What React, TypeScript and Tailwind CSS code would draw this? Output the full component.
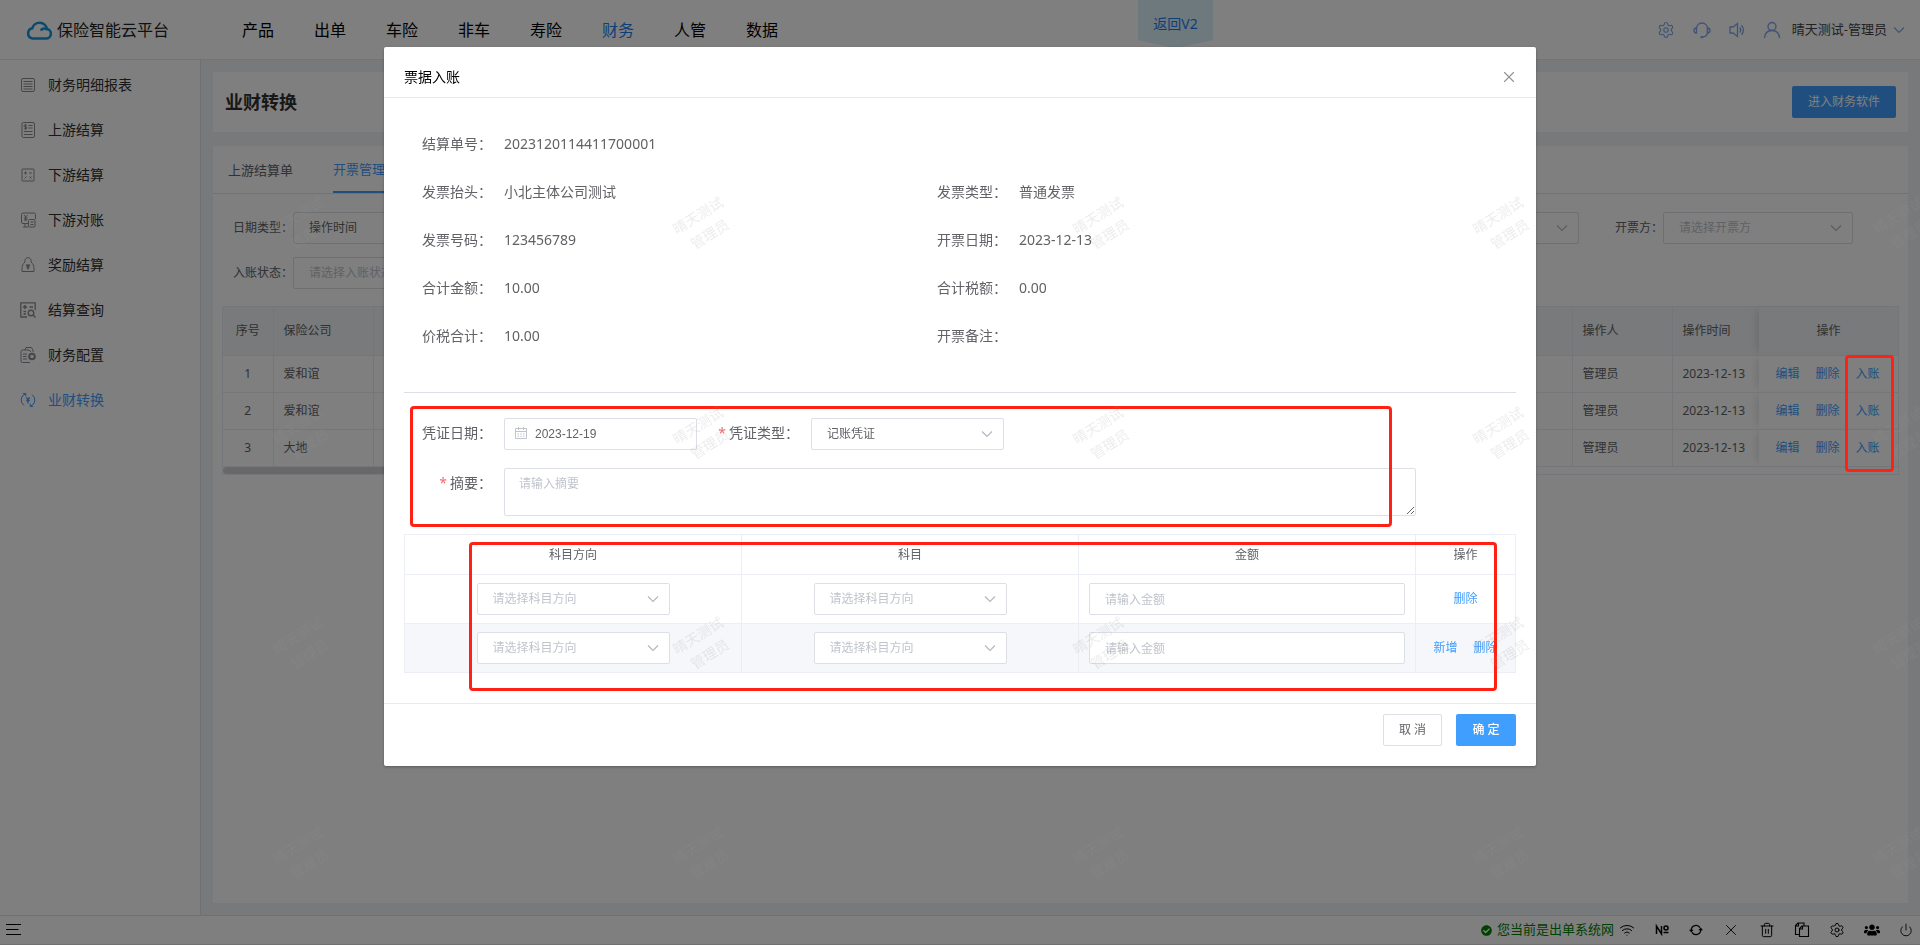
import { useId, useState } from 'react';
import type { ReactNode } from 'react';
import { Power, Settings, Trash2, Wifi, X } from 'lucide-react';
import { FaCheckCircle, FaUsers } from 'react-icons/fa';

const navItems = ['产品', '出单', '车险', '非车', '寿险', '财务', '人管', '数据'];

const invoiceRows = [
    { id: 1, company: '爱和谊', operator: '管理员', date: '2023-12-13' },
    { id: 2, company: '爱和谊', operator: '管理员', date: '2023-12-13' },
    { id: 3, company: '大地', operator: '管理员', date: '2023-12-13' },
];

const details = [
    ['结算单号', '2023120114411700001'],
    null,
    ['发票抬头', '小北主体公司测试'],
    ['发票类型', '普通发票'],
    ['发票号码', '123456789'],
    ['开票日期', '2023-12-13'],
    ['合计金额', '10.00'],
    ['合计税额', '0.00'],
    ['价税合计', '10.00'],
    ['开票备注', ''],
];

function MenuIcon({ children }: { children: ReactNode }) {
    return (
        <svg viewBox="0 0 16 16" className="size-4 shrink-0" fill="none" stroke="currentColor" strokeWidth="1">
            {children}
        </svg>
    );
}

function Arrow({ className = '' }: { className?: string }) {
    return (
        <svg viewBox="0 0 12 8" className={`h-2 w-3 ${className}`} fill="none" stroke="currentColor" strokeWidth="1.2">
            <path d="M1 1.5l5 5 5-5" />
        </svg>
    );
}

const menuItems = [
    {
        label: '财务明细报表',
        icon: (
            <>
                <rect x="1.5" y="1.5" width="13" height="13" rx="1.5" />
                <path d="M3.5 4.5h9M3.5 7h9M3.5 9.5h9M3.5 12h9" />
            </>
        ),
    },
    {
        label: '上游结算',
        icon: (
            <>
                <rect x="2" y=".5" width="12.5" height="15" rx="1.5" />
                <path d="M8.5 3.5h4M8.5 6h4M4 9.5h8.5M4 12.5h8.5M6.8 3H5a.9.9 0 0 0 0 1.9h1a.9.9 0 0 1 0 1.9H4.2M5.5 2.2v5.4" />
            </>
        ),
    },
    {
        label: '下游结算',
        icon: (
            <>
                <rect x="2" y="2" width="12" height="12" rx=".5" />
                <path d="M4 6h3M5.5 4.5v3M9 6h3M4.5 11.5l2-2M9.5 9.5l2 2M11.5 9.5l-2 2" />
            </>
        ),
    },
    {
        label: '下游对账',
        icon: (
            <>
                <path d="M8 11.5H3A1.5 1.5 0 0 1 1.5 10V2.5A1.5 1.5 0 0 1 3 1h11a1.5 1.5 0 0 1 1.5 1.5V7M3 15h5M5 11.5V15M4 3l1.700 2L7.400 3M5.700 5v4M4 6h3.500M4 7.800h3.500" />
                <rect x="8.5" y="7.5" width="6.5" height="7.5" rx="1" />
                <path d="M10.5 10h3M10.5 12.5h3" />
            </>
        ),
    },
    {
        label: '奖励结算',
        icon: (
            <>
                <path d="M5 5a3.200 3.200 0 1 1 6 0c2 1.500 3 4 3 6.500v3H2v-3C2 9 3 6.500 5 5z" />
                <path d="M8 7.500v5M6.300 7.500L8 9.500l1.700-2M6.500 10h3" strokeWidth="1.5" />
            </>
        ),
    },
    {
        label: '结算查询',
        icon: (
            <>
                <path d="M7 15H.8V.8h14.400V8" strokeWidth="1.3" />
                <path d="M3 5h4M5 3v4M9.500 5h3.500M3.500 9.500H6M3.500 12H6" strokeWidth="1.5" />
                <circle cx="11" cy="11" r="2.8" strokeWidth="1.4" />
                <path d="M13 13l2.500 2.500" strokeWidth="1.4" />
            </>
        ),
    },
    {
        label: '财务配置',
        icon: (
            <>
                <path d="M10 15.500H2.500A1.500 1.500 0 0 1 1 14V4.500A1.500 1.500 0 0 1 2.500 3H9l2 2M5 3l1-2.500h5.500L13 3v2M3 7h4M3 9.500h3.500M3 12h4" />
                <circle cx="12" cy="9.5" r="2.8" strokeWidth="2" />
            </>
        ),
    },
    {
        label: '业财转换',
        icon: (
            <>
                <path d="M5.500 1.800a6.500 6.500 0 0 0-1.500 11.500M3 1.500h2.800v2.800M10.500 14.200A6.500 6.500 0 0 0 12 2.700M13 14.500h-2.800v-2.800" />
                <path d="M8 7.500v4M6.300 5.300L8 7.500l1.700-2.200M6.300 8.500h3.400" strokeWidth="1.3" />
            </>
        ),
    },
];

interface SelectBoxProps {
    id?: string;
    label?: string;
    value: string;
    filled?: boolean;
    width?: string;
}

function SelectBox({ id, label, value, filled, width = 'w-[193px]' }: SelectBoxProps) {
    return (
        <span className={`relative inline-block ${width}`}>
            <select
                id={id}
                aria-label={label}
                className={`block h-8 w-full appearance-none rounded-xs border border-[#dcdfe6] bg-white px-[15px] text-xs ${filled ? 'text-[#606266]' : 'text-[#c0c4cc]'}`}
            >
                <option>{value}</option>
            </select>
            <Arrow className="pointer-events-none absolute top-3 right-[11px] text-[#b4b8c0]" />
        </span>
    );
}

function Filter({ label, value, filled }: { label: string; value: string; filled?: boolean }) {
    const id = useId();
    return (
        <div className="flex items-center">
            <label htmlFor={id} className="w-[70px] text-right text-xs whitespace-nowrap text-[#606266]">
                {label}
            </label>
            <SelectBox id={id} value={value} filled={filled} width="w-[190px]" />
        </div>
    );
}

function Header() {
    return (
        <header className="relative flex h-[60px] items-center border-b border-[#e4e7ed] bg-white pr-[15px] pl-[26px]">
            <svg viewBox="0 0 26 20" className="h-5 w-[26px]" fill="none" stroke="#1296db" strokeWidth="2.6" strokeLinecap="round">
                <path d="M6.500 18.500h13.200a4.800 4.800 0 0 0 1.300-9.500A7.600 7.600 0 0 0 6.200 8.300a5.200 5.200 0 0 0 .3 10.200z" />
                <path d="M15.500 9.600A5 5 0 0 1 20.500 9" />
            </svg>
            <span className="ml-[5px] w-[185px] text-base text-[#222]">保险智能云平台</span>
            <nav className="flex gap-10">
                {navItems.map((item) => (
                    <a key={item} href="#" className={`text-base ${item === '财务' ? 'text-[#1c7cec]' : 'text-black'}`}>
                        {item}
                    </a>
                ))}
            </nav>
            <a
                href="#"
                className="absolute top-0 left-[1138px] flex h-12 w-[75px] items-center justify-center bg-[#dcf2fb] text-sm text-[#1c7cec] [clip-path:polygon(0_0,100%_0,100%_84%,50%_100%,0_84%)]"
            >
                返回V2
            </a>
            <div className="ml-auto flex items-center text-[#7fa8e8]">
                <button aria-label="设置" className="mr-[18px]">
                    <Settings className="size-[18px]" strokeWidth={1.5} />
                </button>
                <button aria-label="客服" className="mr-[18px]">
                    <svg viewBox="0 0 18 18" className="size-[18px]" fill="none" stroke="currentColor" strokeWidth="1.3">
                        <path d="M3.500 7.500a5.500 5.500 0 0 1 11 0v4c0 2.500-1.500 4-5 4.500" />
                        <path d="M3.500 7v5C1.800 12 1 11 1 9.500S1.800 7 3.500 7zM14.500 7v5c1.700 0 2.500-1 2.500-2.500S16.200 7 14.500 7z" />
                        <path d="M7.500 16.200h2.500" strokeWidth="2" />
                    </svg>
                </button>
                <button aria-label="消息" className="mr-[18px]">
                    <svg viewBox="0 0 16 16" className="size-4" fill="none" stroke="currentColor" strokeWidth="1.3">
                        <path d="M1 5h3l4.500-3.500v13L4 11H1zM10.800 5.500a4 4 0 0 1 0 5M12.500 3.200a7 7 0 0 1 0 9.600" />
                    </svg>
                </button>
                <button className="flex items-center">
                    <svg viewBox="0 0 18 18" className="size-[18px]" fill="none" stroke="currentColor" strokeWidth="1.4">
                        <circle cx="9" cy="5.5" r="4" />
                        <path d="M1.500 17c.3-4.500 3-7.500 7.500-7.500s7.200 3 7.500 7.500" />
                    </svg>
                    <span className="ml-[11px] text-[13px] text-[#444]">晴天测试-管理员</span>
                    <Arrow className="ml-[6px]" />
                </button>
            </div>
        </header>
    );
}

function Sidebar() {
    return (
        <aside className="w-[201px] shrink-0 border-r border-[#e0e0e0] bg-white pt-[2px]">
            {menuItems.map(({ label, icon }) => (
                <a
                    key={label}
                    href="#"
                    className={`flex h-[45px] items-center gap-3 pl-5 ${label === '业财转换' ? 'text-[#409eff]' : 'text-[#8a8d92]'}`}
                >
                    <MenuIcon>{icon}</MenuIcon>
                    <span className={`text-sm ${label === '业财转换' ? '' : 'text-[#303133]'}`}>{label}</span>
                </a>
            ))}
        </aside>
    );
}

function InvoiceTable() {
    const cell = 'border-r border-b border-[#e8ecf2]';
    const lastCells = 'border-b border-[#e8ecf2]';
    const fixedShadow = 'shadow-[-6px_0_8px_-4px_rgba(0,0,0,0.12)]';
    return (
        <div className="mx-[9px] mt-[17px] border border-[#e8ecf2]">
            <table className="w-full table-fixed border-collapse text-left text-xs text-[#606266]">
                <colgroup>
                    <col className="w-[50px]" />
                    <col className="w-[100px]" />
                    <col />
                    <col className="w-[100px]" />
                    <col className="w-[87px]" />
                    <col className="w-[139px]" />
                </colgroup>
                <thead className="bg-[#f1f4f8]">
                    <tr className="h-12">
                        <th className={`${cell} text-center font-normal`}>序号</th>
                        <th className={`${cell} pl-[10px] font-normal`}>保险公司</th>
                        <td className={cell} />
                        <th className={`${cell} pl-[10px] font-normal`}>操作人</th>
                        <th className={`${lastCells} pl-[10px] font-normal`}>操作时间</th>
                        <th className={`${lastCells} ${fixedShadow} text-center font-normal`}>操作</th>
                    </tr>
                </thead>
                <tbody>
                    {invoiceRows.map((row) => (
                        <tr key={row.id} className="h-[37px]">
                            <td className={`${cell} text-center`}>{row.id}</td>
                            <td className={`${cell} pl-[10px]`}>{row.company}</td>
                            <td className={cell} />
                            <td className={`${cell} pl-[10px]`}>{row.operator}</td>
                            <td className={`${lastCells} pl-[10px] whitespace-nowrap`}>{row.date}</td>
                            <td className={`${lastCells} ${fixedShadow} pr-[2px]`}>
                                <span className="flex justify-center gap-4 text-[#409eff]">
                                    <button>编辑</button>
                                    <button>删除</button>
                                    <button>入账</button>
                                </span>
                            </td>
                        </tr>
                    ))}
                </tbody>
            </table>
            <div className="h-[7px] w-2/3 rounded-full bg-[#d0d0d0]" />
        </div>
    );
}

function StatusBar() {
    return (
        <footer className="flex h-[30px] items-center border-t border-b border-[#e0e0e0] bg-white pr-[7px] pl-[6px] text-black">
            <button aria-label="菜单">
                <svg viewBox="0 0 15 12" className="h-3 w-[15px]" stroke="currentColor" strokeWidth="1">
                    <path d="M0 .5h15M0 5.500h12.500M0 10.500h15" />
                </svg>
            </button>
            <span className="ml-auto flex items-center gap-[5px] text-[13px] text-[#008000]">
                <FaCheckCircle className="size-[11px]" />
                您当前是出单系统网
            </span>
            <div className="ml-[5px] flex items-center gap-[19px]">
                <Wifi className="size-4" strokeWidth={1.5} />
                <svg viewBox="0 0 16 16" className="size-4" fill="none" stroke="currentColor" strokeWidth="1.5" role="img" aria-label="编号">
                    <path d="M2.500 12V4l5 8V4" />
                    <circle cx="12" cy="6" r="2" />
                    <path d="M9.500 10.500h5" />
                </svg>
                <button aria-label="刷新">
                    <svg viewBox="0 0 14 14" className="size-[14px]" fill="none" stroke="currentColor" strokeWidth="1.3">
                        <path d="M2.300 8V7A4.700 4.700 0 0 1 11 4.600M11.700 6v1A4.700 4.700 0 0 1 3 9.400" />
                        <path d="M0 6.800h4.600L2.300 9.600zM9.400 7.200H14L11.700 4.400z" fill="currentColor" stroke="none" />
                    </svg>
                </button>
                <button aria-label="关闭页签"><X className="size-[18px]" strokeWidth={1.2} /></button>
                <button aria-label="清除"><Trash2 className="size-4" strokeWidth={1.5} /></button>
                <button aria-label="复制">
                    <svg viewBox="0 0 16 16" className="size-4" fill="none" stroke="currentColor" strokeWidth="1.1">
                        <path d="M5 12.500H1.500v-9L4 1h6v3M4.500 1v3h-3" />
                        <path d="M5.500 14.500v-8L8 4h6.500v10.500zM8.500 4v3h-3" />
                    </svg>
                </button>
                <button aria-label="系统设置"><Settings className="size-4" strokeWidth={1.5} /></button>
                <button aria-label="用户"><FaUsers className="size-4" /></button>
                <button aria-label="退出"><Power className="size-[14px]" strokeWidth={1.5} /></button>
            </div>
        </footer>
    );
}

function SubjectTable() {
    const cell = 'border border-[#ebeef5] text-center';
    return (
        <table className="mt-2 w-full table-fixed border-collapse text-xs text-[#606266]">
            <colgroup>
                <col />
                <col />
                <col />
                <col className="w-[100px]" />
            </colgroup>
            <thead>
                <tr className="h-10">
                    <th className={`${cell} font-normal`}>科目方向</th>
                    <th className={`${cell} font-normal`}>科目</th>
                    <th className={`${cell} font-normal`}>金额</th>
                    <th className={`${cell} font-normal`}>操作</th>
                </tr>
            </thead>
            <tbody>
                {[0, 1].map((row) => (
                    <tr key={row} className={row === 1 ? 'h-[49px] bg-[#f5f7fa]' : 'h-[49px]'}>
                        <td className={cell}>
                            <div className="flex justify-center">
                                <SelectBox label="科目方向" value="请选择科目方向" />
                            </div>
                        </td>
                        <td className={cell}>
                            <div className="flex justify-center">
                                <SelectBox label="科目" value="请选择科目方向" />
                            </div>
                        </td>
                        <td className={`${cell} px-[10px]`}>
                            <input
                                aria-label="金额"
                                placeholder="请输入金额"
                                className="block h-8 w-full rounded-xs border border-[#dcdfe6] bg-white px-[15px] placeholder:text-[#c0c4cc]"
                            />
                        </td>
                        <td className={cell}>
                            <span className="flex justify-center gap-4 text-[#409eff]">
                                {row === 1 && <button>新增</button>}
                                <button>删除</button>
                            </span>
                        </td>
                    </tr>
                ))}
            </tbody>
        </table>
    );
}

function VoucherForm() {
    const [date, setDate] = useState('2023-12-19');
    const label = 'w-[100px] shrink-0 pr-3 text-right text-sm leading-[30px] whitespace-nowrap text-[#606266]';
    return (
        <form className="pt-[25px]">
            <div className="flex gap-[14px]">
                <div className="flex">
                    <label htmlFor="voucher-date" className={label}>凭证日期：</label>
                    <span className="relative">
                        <svg viewBox="0 0 14 14" className="absolute top-2 left-[10px] size-[14px] text-[#c0c4cc]" fill="none" stroke="currentColor" strokeWidth="1">
                            <path d="M1.500 2.500h11v10h-11zM1.500 5.500h11M4.500 1v3M9.500 1v3M3.500 8h1.500M6.300 8h1.500M9 8h1.500M3.500 10.300h1.500M6.300 10.300h1.500M9 10.300h1.500" />
                        </svg>
                        <input
                            id="voucher-date"
                            value={date}
                            onChange={(e) => setDate(e.target.value)}
                            className="block h-8 w-[193px] rounded-xs border border-[#dcdfe6] pl-[30px] font-['Liberation_Sans',sans-serif] text-xs text-[#606266]"
                        />
                    </span>
                </div>
                <div className="flex">
                    <label htmlFor="voucher-type" className={label}>
                        <span className="mr-[3px] text-[#f56c6c]">*</span>凭证类型：
                    </label>
                    <SelectBox id="voucher-type" value="记账凭证" filled />
                </div>
            </div>
            <div className="mt-[18px] mr-[100px] flex">
                <label htmlFor="summary" className={label}>
                    <span className="mr-[3px] text-[#f56c6c]">*</span>摘要：
                </label>
                <textarea
                    id="summary"
                    placeholder="请输入摘要"
                    className="block h-12 min-w-0 flex-1 resize rounded-xs border border-[#dcdfe6] px-[14px] py-[6px] text-xs leading-[18px] placeholder:text-[#c0c4cc]"
                />
            </div>
        </form>
    );
}

function EntryDialog() {
    return (
        <div role="dialog" aria-label="票据入账" className="relative mx-auto mt-[5vh] w-[60%] rounded-xs bg-white shadow-[0_1px_3px_rgba(0,0,0,0.3)]">
            <div className="flex h-[51px] items-center justify-between border-b border-[#e8eaec] pt-[10px] pr-[18px] pl-5">
                <h2 className="text-sm text-black">票据入账</h2>
                <button aria-label="关闭" className="text-[#909399]">
                    <X className="size-[18px]" strokeWidth={1.5} />
                </button>
            </div>
            <div className="px-5 pb-[30px]">
                <dl className="grid w-[1030px] max-w-full grid-cols-2 gap-y-4 pt-[30px] pb-[40px] text-sm leading-8 text-[#606266]">
                    {details.map((item, index) =>
                        item ? (
                            <div key={item[0]} className="flex">
                                <dt className="w-[100px] pr-3 text-right whitespace-nowrap">{item[0]}：</dt>
                                <dd>{item[1]}</dd>
                            </div>
                        ) : (
                            <div key={index} />
                        ),
                    )}
                </dl>
                <hr className="border-[#dcdfe6]" />
                <VoucherForm />
                <div className="pt-[10px]">
                    <SubjectTable />
                </div>
            </div>
            <div className="flex justify-end gap-[14px] border-t border-[#e8eaec] px-5 pt-[10px] pb-5 text-xs">
                <button className="h-8 w-[59px] rounded-xs border border-[#dcdfe6] text-[#606266]">取 消</button>
                <button className="h-8 w-[60px] rounded-xs bg-[#409eff] font-medium text-white">确 定</button>
            </div>
            {/* highlight frames around the voucher form and the subject table */}
            <div className="pointer-events-none absolute top-[359px] left-[26px] z-30 h-[121px] w-[982px] rounded-sm border-3 border-[#ff2214]" />
            <div className="pointer-events-none absolute top-[495px] left-[85px] z-30 h-[149px] w-[1028px] rounded-sm border-3 border-[#ff2214]" />
        </div>
    );
}

function Watermark() {
    return (
        <div aria-hidden className="pointer-events-none fixed inset-0 z-20 grid grid-cols-[repeat(5,400px)] grid-rows-[repeat(4,210px)] overflow-hidden pt-[120px] pl-[104px]">
            {Array.from({ length: 20 }, (_, i) => (
                <div key={i} className="flex items-center justify-center">
                    <p className="-rotate-32 text-center text-sm leading-[22px] text-[rgba(150,150,150,0.18)]">
                        晴天测试
                        <br />
                        管理员
                    </p>
                </div>
            ))}
        </div>
    );
}

export default function App() {
    return (
        <div className="flex min-h-screen flex-col bg-[#f0f3f7] font-['Noto_Sans','Noto_Sans_CJK_SC',sans-serif]">
            <Header />
            <div className="flex flex-1">
                <Sidebar />
                <main className="flex min-w-0 flex-1 flex-col gap-[14px] p-3">
                    <section className="flex h-[60px] items-center justify-between bg-white px-3">
                        <h1 className="text-lg font-bold text-[#303133]">业财转换</h1>
                        <button className="h-8 w-[104px] rounded-xs bg-[#409eff] text-xs text-white">进入财务软件</button>
                    </section>
                    <section className="flex-1 bg-white">
                        <div className="flex h-12 gap-10 border-b border-[#dfe4ed] px-[15px] text-[13px] leading-[46px]">
                            <button className="text-[#606266]">上游结算单</button>
                            <button className="border-b-2 border-[#409eff] text-[#409eff]">开票管理</button>
                        </div>
                        <div className="grid grid-cols-[repeat(6,274px)] gap-y-[13px] px-[10px] pt-[18px]">
                            <Filter label="日期类型：" value="操作时间" filled />
                            <div className="col-start-5 pl-[70px]">
                                <SelectBox label="状态" value="" width="w-[190px]" />
                            </div>
                            <Filter label="开票方：" value="请选择开票方" />
                            <Filter label="入账状态：" value="请选择入账状态" />
                        </div>
                        <InvoiceTable />
                    </section>
                </main>
            </div>
            <StatusBar />
            <div className="fixed inset-0 z-10 overflow-auto bg-black/50">
                <EntryDialog />
            </div>
            <Watermark />
            <div className="pointer-events-none absolute top-[355px] right-[26px] z-30 h-[117px] w-[49px] rounded-sm border-3 border-[#ff2214]" />
        </div>
    );
}
